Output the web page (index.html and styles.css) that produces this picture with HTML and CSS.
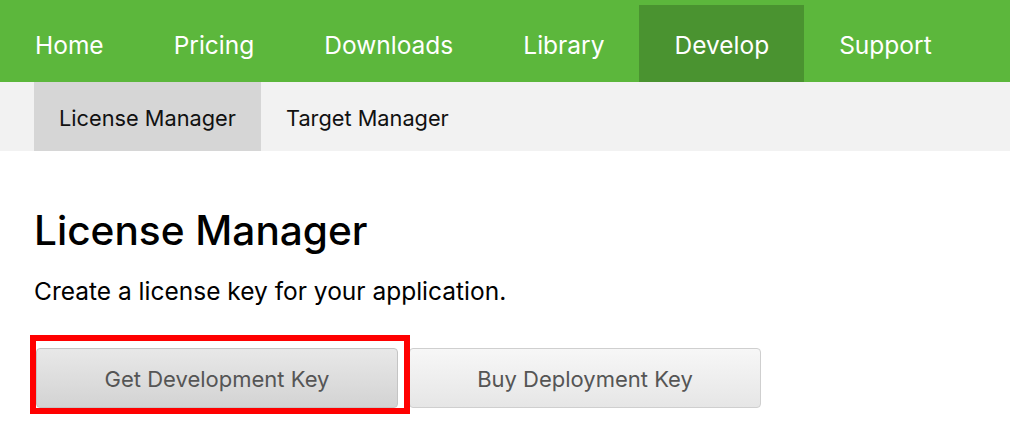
FILE: index.html
```html
<!DOCTYPE html>
<html lang="en">
<head>
<meta charset="utf-8">
<title>License Manager</title>
<link rel="stylesheet" href="styles.css">
</head>
<body>
<nav class="topnav">
  <a class="topnav-item">Home</a>
  <a class="topnav-item">Pricing</a>
  <a class="topnav-item">Downloads</a>
  <a class="topnav-item">Library</a>
  <a class="topnav-item active">Develop</a>
  <a class="topnav-item">Support</a>
</nav>
<nav class="subnav">
  <a class="subnav-item active">License Manager</a>
  <a class="subnav-item">Target Manager</a>
</nav>
<main class="content">
  <h1 class="title">License Manager</h1>
  <p class="lead">Create a license key for your application.</p>
  <div class="actions">
    <div class="highlight-wrap">
      <button class="btn btn-pressed">Get Development Key</button>
      <span class="highlight"></span>
    </div>
    <button class="btn btn-wide">Buy Deployment Key</button>
  </div>
</main>
</body>
</html>
```
FILE: styles.css
```css
* { box-sizing: border-box; }
html, body { margin: 0; padding: 0; background: #fff; }
body {
  min-height: 436px;
  font-family: Inter, Roboto, "Liberation Sans", sans-serif;
  color: #000;
}

.topnav {
  display: flex;
  height: 82px;
  background: #5cb73c;
  align-items: flex-end;
}
.topnav-item {
  display: flex;
  align-items: center;
  height: 77px;
  padding: 0 35px;
  padding-top: 2px;
  color: #fff;
  font-size: 24.5px;
}
.topnav-item.active { background: #4a9330; }

.subnav {
  display: flex;
  height: 69px;
  background: #f2f2f2;
  padding-left: 34px;
}
.subnav-item {
  display: flex;
  align-items: center;
  padding: 3px 25px 0;
  font-size: 21.75px;
  color: #111;
}
.subnav-item.active { background: #d6d6d6; }

.content { padding: 0 34px 28px; }
.title {
  margin: 52px 0 0;
  font-size: 40.6px;
  font-weight: 500;
  line-height: 56px;
}
.lead {
  margin: 17px 0 0;
  font-size: 24.5px;
  line-height: 30px;
}
.actions {
  display: flex;
  align-items: flex-start;
  gap: 11px;
  margin-top: 42px;
  padding-left: 2px;
}
.highlight-wrap { position: relative; }
.btn {
  display: block;
  height: 60px;
  width: 352px;
  border: 1px solid #cfcfcf;
  border-radius: 4px;
  background: linear-gradient(#f7f7f7, #e6e6e6);
  color: #555;
  font-family: inherit;
  font-size: 22px;
  padding: 2px 0 0;
}
.btn-pressed {
  width: 362px;
  background: linear-gradient(#e8e8e8, #d3d3d3);
  border-color: #c4c4c4;
}
.highlight {
  position: absolute;
  left: -6px; top: -13px; right: -12px; bottom: -6px;
  border: 6px solid #f00;
}
```
